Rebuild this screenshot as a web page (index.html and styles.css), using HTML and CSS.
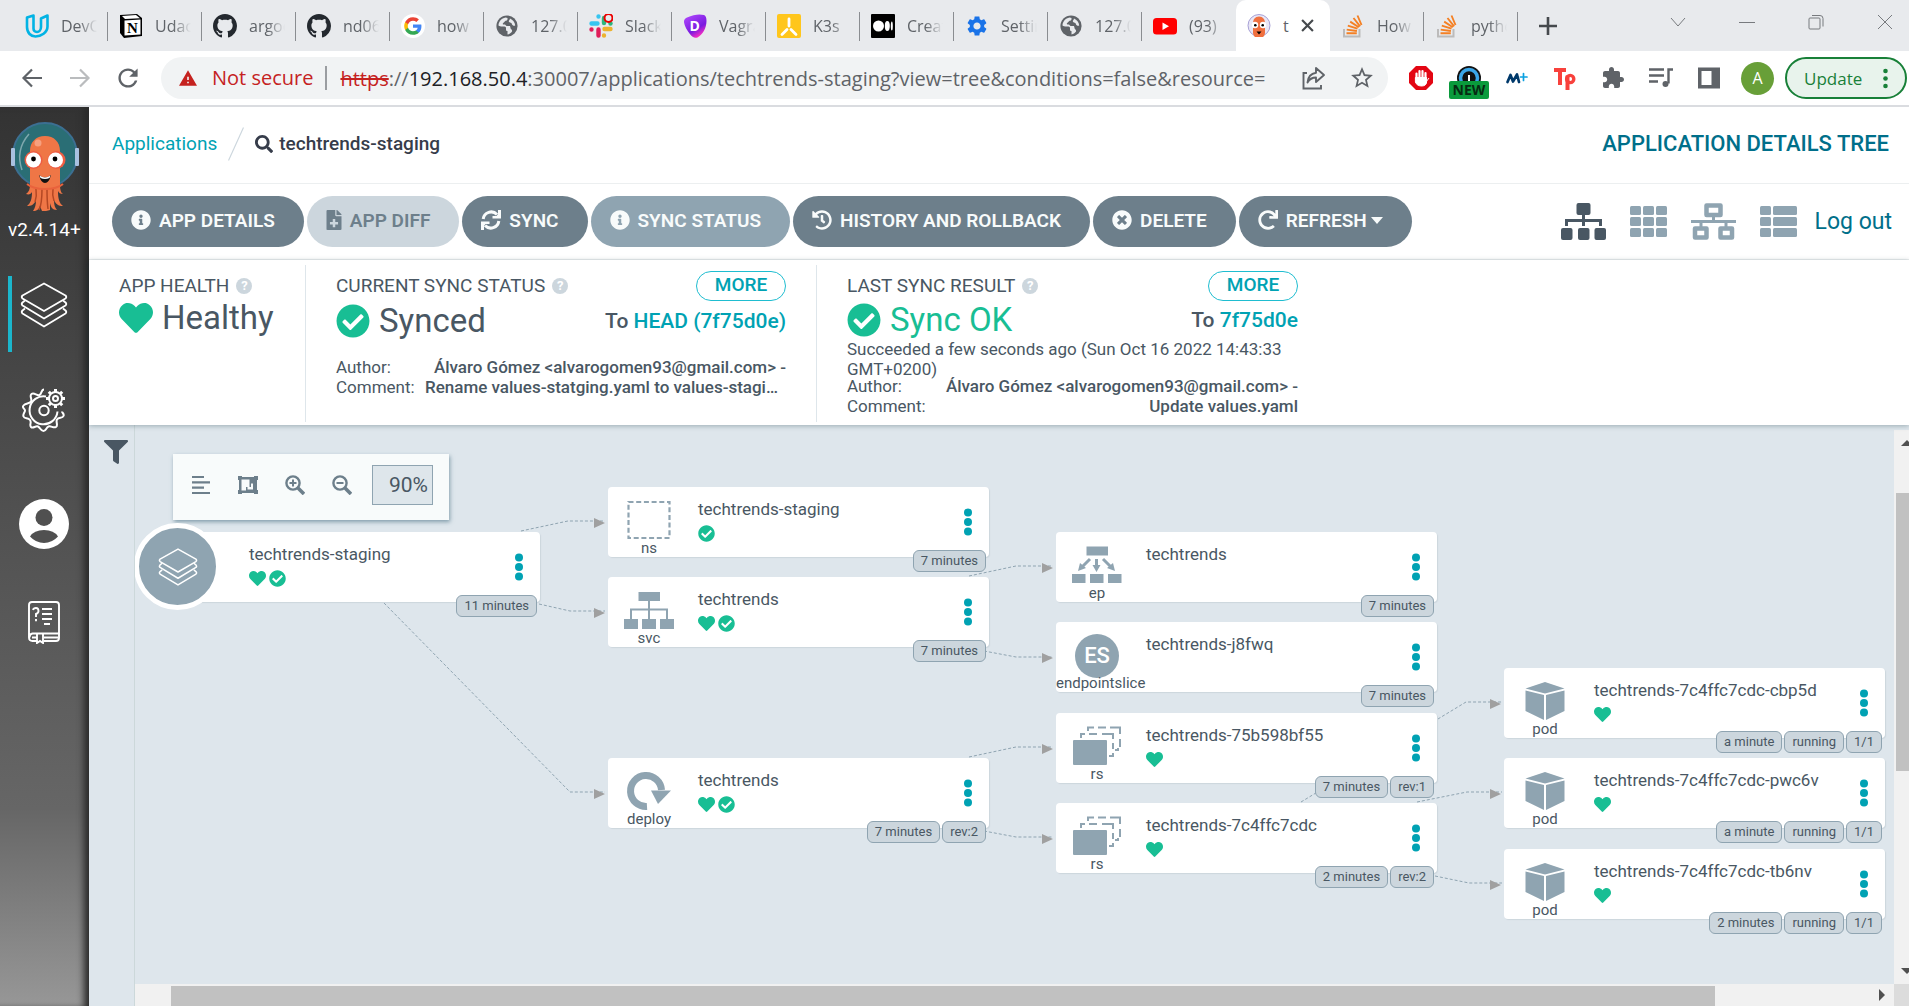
FILE: index.html
```html
<!DOCTYPE html>
<html lang="en">
<head>
<meta charset="utf-8">
<meta name="viewport" content="width=device-width, initial-scale=1">
<title>techtrends-staging - Argo CD</title>
<link rel="stylesheet" href="styles.css">
</head>
<body>
<svg class="sprite" width="0" height="0" aria-hidden="true">
  <symbol id="i-github" viewBox="0 0 16 16"><path d="M8 0C3.58 0 0 3.58 0 8c0 3.54 2.29 6.53 5.47 7.59.4.07.55-.17.55-.38 0-.19-.01-.82-.01-1.49-2.01.37-2.53-.49-2.69-.94-.09-.23-.48-.94-.82-1.13-.28-.15-.68-.52-.01-.53.63-.01 1.08.58 1.23.82.72 1.21 1.87.87 2.33.66.07-.52.28-.87.51-1.07-1.78-.2-3.64-.89-3.64-3.95 0-.87.31-1.59.82-2.15-.08-.2-.36-1.02.08-2.12 0 0 .67-.21 2.2.82.64-.18 1.32-.27 2-.27.68 0 1.36.09 2 .27 1.53-1.04 2.2-.82 2.2-.82.44 1.1.16 1.92.08 2.12.51.56.82 1.27.82 2.15 0 3.07-1.87 3.75-3.65 3.95.29.25.54.73.54 1.48 0 1.07-.01 1.93-.01 2.2 0 .21.15.46.55.38A8.013 8.013 0 0016 8c0-4.42-3.58-8-8-8z" fill="#24292f"/></symbol>
  <symbol id="i-globe" viewBox="0 0 24 24"><circle cx="12" cy="12" r="10.600" fill="#5f6368"/><path d="M10.500 3.500C6.500 4.200 3.600 7.600 3.500 11.500c1 .8 2.200 1 3.500 1h2.500c1 0 1.500.8 1.500 1.700v1.300c0 1 .6 1.500 1.500 1.500v3.500c1.800-.4 3.500-1.500 4.500-3 .3-1-.2-2-1.200-2.500l-.8-3h-3.500l-1.500-1.500H8.500c-.6 0-1-.5-.5-1.200l2.500-2.500c1.200 0 2-.6 2-1.500V4z" fill="#e8eaed"/><path d="M15 4.500c2.800 1.200 5 4 5.200 7-1.400.5-2.800 0-3.200-1.300-.3-1-1-1.500-2-1.700-1.500-.4-1.500-2-.5-2.500z" fill="#e8eaed"/></symbol>
  <symbol id="i-stackoverflow" viewBox="0 0 24 24"><path d="M3 15v7.500h15.500V15" fill="none" stroke="#bcbbbb" stroke-width="2"/><path d="M5.500 19.200h10.300M5.700 15.600l10.200 1.400M6.800 11.600l9.700 3M9.200 7.600l8.600 5.600M12.500 4l6.600 8.300M16.500 1.500l4 9.500" stroke="#f48024" stroke-width="1.900" fill="none"/></symbol>
  <symbol id="i-info" viewBox="0 0 512 512"><path d="M256 8C119.043 8 8 119.083 8 256c0 136.997 111.043 248 248 248s248-111.003 248-248C504 119.083 392.957 8 256 8zm0 110c23.196 0 42 18.804 42 42s-18.804 42-42 42-42-18.804-42-42 18.804-42 42-42zm56 254c0 6.627-5.373 12-12 12h-88c-6.627 0-12-5.373-12-12v-24c0-6.627 5.373-12 12-12h12v-64h-12c-6.627 0-12-5.373-12-12v-24c0-6.627 5.373-12 12-12h64c6.627 0 12 5.373 12 12v100h12c6.627 0 12 5.373 12 12v24z"/></symbol>
  <symbol id="i-check" viewBox="0 0 512 512"><path d="M504 256c0 136.967-111.033 248-248 248S8 392.967 8 256 119.033 8 256 8s248 111.033 248 248zM227.314 387.314l184-184c6.248-6.248 6.248-16.379 0-22.627l-22.627-22.627c-6.248-6.249-16.379-6.249-22.628 0L216 308.118l-70.059-70.059c-6.248-6.248-16.379-6.248-22.628 0l-22.627 22.627c-6.248 6.248-6.248 16.379 0 22.627l104 104c6.249 6.249 16.379 6.249 22.628.001z" fill="#18be94"/></symbol>
  <symbol id="i-heart" viewBox="0 0 512 512"><path d="M462.300 62.600C407.500 15.900 326 24.300 275.700 76.200L256 96.500l-19.700-20.300C186.100 24.300 104.500 15.900 49.700 62.600c-62.800 53.600-66.100 149.800-9.900 207.900l193.500 199.800c12.500 12.900 32.800 12.900 45.300 0l193.500-199.800c56.300-58.100 53-154.300-9.800-207.900z" fill="#18be94"/></symbol>
  <symbol id="i-layers" viewBox="0 0 48 46"><g fill="none" stroke="#fff" stroke-linejoin="round" stroke-width="1.800"><path d="M24 1.500L2.500 13.500q-1.500 1.500 0 3L24 29l21.500-12.500q1.500-1.500 0-3z"/><path d="M5 18.500l-2.500 2q-1.500 1.500 0 3L24 36.500l21.500-13q1.500-1.500 0-3l-2.500-2"/><path d="M5 26.500l-2.500 2q-1.500 1.500 0 3L24 44.500l21.500-13q1.500-1.500 0-3l-2.500-2"/></g></symbol>
  <symbol id="i-kebab" viewBox="0 0 8 28"><circle cx="4" cy="4.500" r="4"/><circle cx="4" cy="14" r="4"/><circle cx="4" cy="23.500" r="4"/></symbol>
  <symbol id="k-rs" viewBox="0 0 50 40"><rect x="1" y="14" width="34" height="25" rx="1"/><path d="M9 12V8h4M17 8h8M30 8h11v5M41 17v6M41 27v3h-4M16 5V1.500h6M26 1.500h8M38 1.500h10V8M48 13v8M43 24h3v-2" fill="none" stroke="#8fa4b1" stroke-width="2"/></symbol>
  <symbol id="k-pod" viewBox="0 0 50 40"><path d="M25 1l19.500 6.500L25 12.500 5.500 7.500zM5.500 9.500L24 14v25L5.500 30zM44.500 9.500L26 14v25l18.500-9z"/></symbol>
</svg>

<header class="browser">
  <div class="tabstrip">
    <div class="tabs" role="tablist">
      <button class="tab" role="tab"><svg class="fav" viewBox="0 0 24 24"><path d="M2 3.500v9.500c0 6 4 9.500 8.500 9.500 5.500 0 12-4 12-10V1.500l-6.500 3v8.500c0 3-2 5-4 5-2.500 0-3.500-1.500-3.500-3.500V1.500z" fill="none" stroke="#02b3e4" stroke-width="2.600" stroke-linejoin="round"/></svg><span>DevOps</span></button>
      <button class="tab" role="tab"><svg class="fav" viewBox="0 0 24 24"><path d="M1 1l17-1 5 4v18L5 24l-4-5z" fill="#000"/><path d="M3 2l14-1 4 3.200L6 5z" fill="#fff"/><path d="M5.500 6.500l16-1v15l-16 1z" fill="#fff"/><text x="8" y="19" font-family="Liberation Serif,serif" font-weight="700" font-size="15">N</text></svg><span>Udacity</span></button>
      <button class="tab" role="tab"><svg class="fav"><use href="#i-github"/></svg><span>argocd</span></button>
      <button class="tab" role="tab"><svg class="fav"><use href="#i-github"/></svg><span>nd064</span></button>
      <button class="tab" role="tab"><svg class="fav" viewBox="-3 -3 30 30"><circle cx="12" cy="12" r="15" fill="#fff"/><path fill="#4285f4" d="M22.560 12.250c0-.78-.07-1.530-.2-2.250H12v4.260h5.920c-.26 1.370-1.040 2.530-2.210 3.310v2.770h3.570c2.080-1.920 3.280-4.740 3.280-8.090z"/><path fill="#34a853" d="M12 23c2.970 0 5.460-.98 7.280-2.660l-3.570-2.770c-.98.66-2.230 1.060-3.710 1.060-2.860 0-5.290-1.930-6.160-4.530H2.180v2.840C3.990 20.530 7.700 23 12 23z"/><path fill="#fbbc05" d="M5.840 14.090c-.22-.66-.35-1.360-.35-2.090s.13-1.430.35-2.090V7.070H2.180C1.430 8.550 1 10.220 1 12s.43 3.450 1.180 4.930l2.850-2.220.81-.62z"/><path fill="#ea4335" d="M12 5.380c1.620 0 3.060.56 4.210 1.640l3.150-3.150C17.450 2.090 14.970 1 12 1 7.700 1 3.990 3.470 2.180 7.070l3.660 2.840c.87-2.600 3.300-4.530 6.160-4.530z"/></svg><span>how t</span></button>
      <button class="tab" role="tab"><svg class="fav"><use href="#i-globe"/></svg><span>127.0.0</span></button>
      <button class="tab" role="tab"><svg class="fav" viewBox="0 0 24 24"><g fill="none" stroke-width="4.400" stroke-linecap="round"><path d="M2.500 9.500h6M9.500 2.500h0" stroke="#36c5f0"/><path d="M15 4v5" stroke="#2eb67d"/><path d="M15.500 15h6M15 21.500h0" stroke="#ecb22e"/><path d="M9.500 15.500v6M2.500 15.500h0" stroke="#e01e5a"/><path d="M21.500 9.500h0" stroke="#2eb67d"/></g><circle cx="19.500" cy="4" r="4" fill="#e8eaed" stroke="#eb0000" stroke-width="2"/></svg><span>Slack</span></button>
      <button class="tab" role="tab"><svg class="fav" viewBox="0 0 24 24"><defs><linearGradient id="vg" x1="0" y1="0" x2=".6" y2="1"><stop offset="0" stop-color="#b44cff"/><stop offset=".7" stop-color="#7a1be0"/><stop offset="1" stop-color="#ff2fc0"/></linearGradient></defs><path d="M4 3.500Q14-1 21 1q2.500 1 2.500 6c0 7-4 14-9 16.500-3 1-5 0-8-4C3 15 1 10 1 7.500 1 5.500 2 4.500 4 3.500z" fill="url(#vg)"/><text x="6.500" y="17" font-family="Open Sans,sans-serif" font-weight="700" font-size="14" fill="#fff">D</text></svg><span>Vagrant</span></button>
      <button class="tab" role="tab"><svg class="fav" viewBox="0 0 24 24"><rect width="24" height="24" rx="2" fill="#ffc61c"/><path d="M12 5v7M10 15.500l-5 5M14 15.500l5 5" stroke="#fff" stroke-width="2.800" stroke-linecap="round"/></svg><span>K3s</span></button>
      <button class="tab" role="tab"><svg class="fav" viewBox="0 0 24 24"><rect width="24" height="24" rx="1"/><g fill="#fff"><ellipse cx="7.500" cy="12" rx="5.500" ry="5.500"/><ellipse cx="16.300" cy="12" rx="2.500" ry="5"/><ellipse cx="20.800" cy="12" rx="1" ry="4.500"/></g></svg><span>Create</span></button>
      <button class="tab" role="tab"><svg class="fav" viewBox="0 0 24 24"><path d="M19.140 12.940c.04-.3.06-.61.06-.94 0-.32-.02-.64-.07-.94l2.030-1.580c.18-.14.23-.41.12-.61l-1.920-3.320c-.12-.22-.37-.29-.59-.22l-2.390.96c-.5-.38-1.030-.7-1.620-.94l-.36-2.540c-.04-.24-.24-.41-.48-.41h-3.840c-.24 0-.43.17-.47.41l-.36 2.540c-.59.24-1.130.57-1.620.94l-2.390-.96c-.22-.08-.47 0-.59.22L2.740 8.870c-.12.21-.08.47.12.61l2.030 1.580c-.05.3-.09.63-.09.94s.02.64.07.94l-2.030 1.580c-.18.14-.23.41-.12.61l1.920 3.320c.12.22.37.29.59.22l2.390-.96c.5.38 1.030.7 1.620.94l.36 2.540c.05.24.24.41.48.41h3.840c.24 0 .44-.17.47-.41l.36-2.540c.59-.24 1.130-.56 1.620-.94l2.390.96c.22.08.47 0 .59-.22l1.920-3.320c.12-.22.07-.47-.12-.61l-2.010-1.580zM12 15.600c-1.980 0-3.600-1.620-3.600-3.600s1.620-3.600 3.600-3.600 3.600 1.620 3.600 3.600-1.620 3.600-3.600 3.600z" fill="#1a73e8"/></svg><span>Settings</span></button>
      <button class="tab" role="tab"><svg class="fav"><use href="#i-globe"/></svg><span>127.0.</span></button>
      <button class="tab" role="tab"><svg class="fav" viewBox="0 0 24 24"><rect y="4" width="24" height="16.500" rx="3.500" fill="#f00"/><path d="M9.500 8.500v7.500l6.500-3.700z" fill="#fff"/></svg><span>(93)</span></button>
      <button class="tab active" role="tab" aria-selected="true"><svg class="fav" viewBox="0 0 24 24"><circle cx="12" cy="11.500" r="11" fill="#e9e7f5" stroke="#a7a0d6" stroke-width="1"/><path d="M12 2.500c4 0 6 3 6 7v9c0 2-1 4-2 4.500H8C7 22.500 6 20.500 6 18.500v-9c0-4 2-7 6-7z" fill="#f0703f"/><circle cx="8" cy="11" r="3.200" fill="#fff"/><circle cx="16" cy="11" r="3.200" fill="#fff"/><circle cx="8.300" cy="11.300" r="1.300"/><circle cx="15.700" cy="11.300" r="1.300"/><path d="M9.500 17.500h5l-2.500 3z"/></svg><span>t</span><svg class="close" viewBox="0 0 12 12"><path d="M1 1l10 10M11 1L1 11" stroke="#45494d" stroke-width="2"/></svg></button>
      <button class="tab" role="tab"><svg class="fav"><use href="#i-stackoverflow"/></svg><span>How to</span></button>
      <button class="tab" role="tab"><svg class="fav"><use href="#i-stackoverflow"/></svg><span>python</span></button>
      <button class="newtab" aria-label="New tab"><svg width="18" height="18" viewBox="0 0 18 18"><path d="M9 0v18M0 9h18" stroke="#45494d" stroke-width="2.600"/></svg></button>
    </div>
    <div class="winctl">
      <button aria-label="Search tabs"><svg viewBox="0 0 16 16"><path d="M1 4l7 8 7-8"/></svg></button>
      <button aria-label="Minimize"><svg viewBox="0 0 16 16"><path d="M0 8.500h16"/></svg></button>
      <button aria-label="Restore"><svg viewBox="0 0 16 16"><rect x="1" y="4" width="11" height="11" rx="1"/><path d="M4 1.500h8q3 0 3 3v8"/></svg></button>
      <button aria-label="Close"><svg viewBox="0 0 16 16"><path d="M1 1l14 14M15 1L1 15"/></svg></button>
    </div>
  </div>
  <div class="navbar">
    <button class="nav" aria-label="Back"><svg viewBox="0 0 24 24"><path d="M22 12H4M12 3.500L3.500 12l8.500 8.500" fill="none" stroke="#5f6368" stroke-width="2.200"/></svg></button>
    <button class="nav" aria-label="Forward"><svg viewBox="0 0 24 24"><path d="M2 12h18M12 3.500l8.500 8.500-8.500 8.500" fill="none" stroke="#babcbe" stroke-width="2.200"/></svg></button>
    <button class="nav" aria-label="Reload"><svg viewBox="2 2 20 20"><path d="M17.650 6.350C16.200 4.900 14.210 4 12 4c-4.420 0-7.990 3.580-7.990 8s3.570 8 7.990 8c3.730 0 6.840-2.550 7.730-6h-2.080c-.82 2.330-3.040 4-5.650 4-3.310 0-6-2.690-6-6s2.690-6 6-6c1.660 0 3.140.69 4.220 1.780L13 11h7V4l-2.350 2.350z" fill="#5f6368"/></svg></button>
    <div class="omnibox">
      <svg class="warn" viewBox="1 2 22 19"><path d="M1 21h22L12 2 1 21zm12-3h-2v-2h2v2zm0-4h-2v-4h2v4z" fill="#c5221f"/></svg>
      <span class="insecure">Not secure</span>
      <div class="url" role="textbox" aria-label="Address" contenteditable="true" spellcheck="false"><s>https</s>://<b>192.168.50.4</b>:30007/applications/techtrends-staging?view=tree&amp;conditions=false&amp;resource=</div>
      <button class="omni" aria-label="Share"><svg viewBox="0 0 24 24" fill="none" stroke="#5f6368" stroke-width="1.900"><path d="M5 7H1.500v15.500H19V19"/><path d="M14 2l8 7-8 7v-4.500c-4 0-6.500 1.500-8.500 5 .5-5.500 3-9 8.500-9.800z" stroke-linejoin="round"/></svg></button>
      <button class="omni" aria-label="Bookmark"><svg viewBox="1 1 22 22"><path d="M22 9.240l-7.190-.62L12 2 9.190 8.630 2 9.240l5.460 4.730L5.820 21 12 17.270 18.180 21l-1.630-7.030L22 9.240zM12 15.400l-3.760 2.270 1-4.280-3.320-2.880 4.380-.38L12 6.100l1.710 4.040 4.380.38-3.320 2.880 1 4.280L12 15.400z" fill="#5f6368"/></svg></button>
    </div>
    <div class="extensions">
      <button aria-label="Ad blocker"><svg viewBox="0 0 24 24"><path d="M7 0h10l7 7v10l-7 7H7l-7-7V7z" fill="#e30613"/><path d="M7.500 13V7.500M10.500 12V5M13.500 12V5M16.500 13V7" stroke="#fff" stroke-width="2.200" stroke-linecap="round"/><path d="M6.400 11.500h11.200V16c0 2.500-2 4-5 4s-5.500-1.500-6.200-4zM17 16l3-4" fill="#fff" stroke="#fff" stroke-width="1"/></svg></button>
      <button class="ext-new" aria-label="Extension"><svg viewBox="0 0 24 24"><circle cx="12" cy="12" r="12" fill="#111"/><circle cx="12" cy="12" r="8.500" fill="none" stroke="#3aa6e8" stroke-width="3.500"/><path d="M11 9h2v6h-2z" fill="#fff"/></svg><span>NEW</span></button>
      <button aria-label="M plus"><svg viewBox="0 0 24 24" fill="none" stroke-linecap="round"><path d="M2.500 16l3-7 2.500 6.500 4-7 2 7.500" stroke="#00396b" stroke-width="2.700" stroke-linejoin="round"/><path d="M18.500 7.500v7M15.500 11h6.500" stroke="#0aa0e0" stroke-width="1.700"/></svg></button>
      <button aria-label="Tp"><svg viewBox="0 0 24 24" fill="none" stroke="#f8413c" stroke-width="4"><path d="M1 4h12M7 4v15"/><path d="M14.500 24V9.500"/><circle cx="17.200" cy="13" r="3.600" stroke-width="3.400"/></svg></button>
      <button aria-label="Extensions"><svg viewBox="0 0 24 24"><path d="M20.500 11H19V7c0-1.100-.9-2-2-2h-4V3.500C13 2.120 11.880 1 10.500 1S8 2.120 8 3.500V5H4c-1.100 0-1.990.9-1.990 2v3.800H3.500c1.490 0 2.700 1.210 2.700 2.700s-1.210 2.700-2.700 2.700H2V20c0 1.100.9 2 2 2h3.800v-1.500c0-1.490 1.210-2.700 2.700-2.700 1.490 0 2.700 1.210 2.700 2.700V22H17c1.100 0 2-.9 2-2v-4h1.500c1.380 0 2.500-1.120 2.500-2.500S21.880 11 20.500 11z" fill="#5f6368"/></svg></button>
      <button aria-label="Media"><svg viewBox="0 0 24 24" fill="none" stroke="#5f6368" stroke-width="2.400"><path d="M0 3.500h15M0 9.500h15M0 15.500h9M24 3.500h-4.500v14"/><circle cx="16.500" cy="18" r="3" fill="#5f6368" stroke="none"/></svg></button>
      <button aria-label="Side panel"><svg viewBox="0 0 24 24"><path d="M1 1.500h22v21H1zM4.500 5v14h10V5z" fill="#5f6368" fill-rule="evenodd"/></svg></button>
      <button class="avatar" aria-label="Profile">A</button>
    </div>
    <button class="update">Update <svg viewBox="0 0 5 21"><circle cx="2.500" cy="3" r="2.300"/><circle cx="2.500" cy="10.500" r="2.300"/><circle cx="2.500" cy="18" r="2.300"/></svg></button>
  </div>
</header>

<div class="app">
  <nav class="sidebar">
    <svg class="logo" viewBox="0 0 68 90"><circle cx="34" cy="33" r="32" fill="#2a6e75" stroke="#3c6f92" stroke-width="2"/><path d="M18 12Q4 28 11 48" fill="none" stroke="#7fa8ae" stroke-width="1.500"/><rect x="0" y="26" width="4" height="18" rx="1" fill="#a9c1e0"/><rect x="64" y="26" width="4" height="18" rx="1" fill="#a9c1e0"/><path d="M34 14c9 0 15 6 15 15v34c0 5 1 8 3 9-3 0-4-1-5-3 0 7 1 12 5 15-5 0-7-2-9-6 0 5 1 8 3 10-5 0-6-3-7-7v7c-2 1-6 1-8 1l-2-5c-1 3-3 5-7 5 2-3 3-6 3-11-2 5-5 6-9 6 4-3 5-8 5-14-1 2-3 3-6 2 3-2 4-5 4-9V29c0-9 6-15 15-15z" fill="#ef7646"/><path d="M28 88q3-6 3-21M37 87q-1-8-1-20M24 80q2-6 1-13M43 79q-2-6-1-12" stroke="#b34724" stroke-width="1.500" fill="none"/><path d="M16 62q6 5 18 5t18-5" stroke="#e9623c" stroke-width="2" fill="none"/><circle cx="27" cy="21" r="3.500" fill="#f7a07e"/><circle cx="22.500" cy="38" r="9" fill="#ee5d43"/><circle cx="45.500" cy="38" r="9" fill="#ee5d43"/><circle cx="22.500" cy="38" r="7.500" fill="#fff"/><circle cx="44.500" cy="38" r="7.500" fill="#fff"/><circle cx="22.500" cy="37" r="2.400"/><circle cx="44" cy="37" r="2.400"/><path d="M28 53q6 5 12 0-2 8-6 8t-6-8z" fill="#111"/><path d="M28.500 53.500q5.500 4 11 0l-1 2.500q-4.500 2-9 0z" fill="#fff"/></svg>
    <div class="version">v2.4.14+</div>
    <a class="side on" href="#" aria-label="Applications"><svg width="48" height="46"><use href="#i-layers"/></svg></a>
    <a class="side" href="#" aria-label="Settings"><svg width="44" height="44" viewBox="0 0 44 44" fill="none" stroke="#fff" stroke-width="2"><path d="M22 1.500c-3 0-2 4.500-4.500 5.500S12 4 9.500 6s1 5-.5 7.500-5.500 1.500-7.500 4 1.500 3 1.500 5-2.500 3.500-1.500 6 4.500 1 6.500 3.500-1 5 1 7 4.500-1.500 7-.5 2.500 4.500 5.500 4.500 2.500-3.500 5-4.500 5 2 7.500.5-.5-5 1-7.500 5.500-1 6.500-3.500-1.500-3-1.500-4.500"/><path d="M24 8.500a14 14 0 1 0 11.500 15"/><circle cx="22" cy="22.500" r="4.700"/><circle cx="33.500" cy="10.500" r="2.500"/><circle cx="33.500" cy="10.500" r="6.500"/><path d="M33.500 1v3M33.500 17v3M24 10.500h3M40 10.500h3M26.800 3.800l2 2M38.200 15.200l2 2M40.200 3.800l-2 2M28.800 15.200l-2 2" stroke-width="3"/></svg></a>
    <a class="side" href="#" aria-label="User info"><svg width="50" height="50" viewBox="0 0 50 50"><circle cx="25" cy="25" r="25" fill="#fff"/><circle cx="25" cy="18.500" r="8.500" fill="#505050"/><path d="M11 37.500Q15 31 25 31t14 6.500Q33 44 25 44t-14-6.500z" fill="#505050"/></svg></a>
    <a class="side" href="#" aria-label="Documentation"><svg width="32" height="43" viewBox="0 0 32 43" fill="none" stroke="#fff" stroke-width="1.900"><path d="M9 40H4.500Q1 40 1 36.500V4q0-3 3-3h24q3 0 3 3v28.500H4.500Q1.500 33 1.500 36.500"/><path d="M4 36.500h4.500M16 36.500h14M16 40h12q3 0 3-3v-5M9 33v9l3-2 3 2v-9"/><path d="M14 8h10M14 13h10M14 18h10M16 23h6"/><path d="M5 9q.5-2 3-2t2.500 3q0 2-2.500 3v3M8 18v2.200"/></svg></a>
  </nav>

  <main class="main">
    <div class="crumbs">
      <a class="crumb" href="#">Applications</a>
      <svg class="slash" viewBox="0 0 16 34"><path d="M.5 33.500L15.500.5" stroke="#ccd6dd" stroke-width="1.200"/></svg>
      <svg class="search" viewBox="0 0 512 512"><path d="M505 442.700L405.300 343c-4.500-4.500-10.600-7-17-7H372c27.600-35.300 44-79.700 44-128C416 93.100 322.900 0 208 0S0 93.100 0 208s93.100 208 208 208c48.300 0 92.700-16.400 128-44v16.300c0 6.400 2.500 12.500 7 17l99.700 99.700c9.400 9.400 24.600 9.400 33.900 0l28.300-28.300c9.400-9.400 9.400-24.600.1-34zM208 336c-70.700 0-128-57.200-128-128 0-70.700 57.200-128 128-128 70.700 0 128 57.200 128 128 0 70.700-57.200 128-128 128z" fill="#363c4a"/></svg>
      <span class="crumb-name">techtrends-staging</span>
      <h1>APPLICATION DETAILS TREE</h1>
    </div>

    <div class="actions">
      <button class="btn"><svg><use href="#i-info"/></svg>APP DETAILS</button>
      <button class="btn disabled"><svg class="doc" viewBox="0 0 384 512"><path fill-rule="evenodd" d="M224 136V0H24C10 0 0 10 0 24v464c0 13 10 24 24 24h336c13 0 24-11 24-24V160H248c-13 0-24-11-24-24zM160 232h64v72h72v64h-72v72h-64v-72H88v-64h72zM377 105L279 7c-5-5-11-7-17-7h-6v128h128v-6c0-6-3-12-7-17z"/></svg>APP DIFF</button>
      <button class="btn"><svg viewBox="0 0 20 20"><path d="M2.200 9A8 8 0 0 1 16 4.500M17.800 11A8 8 0 0 1 4 15.500" fill="none" stroke="#f8fbfb" stroke-width="3"/><path d="M20 0v8.500h-8.500V6h4L17 4V0zM0 20v-8.500h8.500V14h-4L3 16v4z"/></svg>SYNC</button>
      <button class="btn soft"><svg><use href="#i-info"/></svg>SYNC STATUS</button>
      <button class="btn"><svg viewBox="0 0 512 512"><path d="M504 255.531c.253 136.640-111.180 248.372-247.820 248.468-59.015.042-113.223-20.530-155.822-54.911-11.077-8.940-11.905-25.541-1.839-35.607l11.267-11.267c8.609-8.609 22.353-9.551 31.891-1.984C173.062 425.135 212.781 440 256 440c101.705 0 184-82.311 184-184 0-101.705-82.311-184-184-184-48.814 0-93.149 18.969-126.068 49.932l50.754 50.754c10.080 10.080 2.941 27.314-11.313 27.314H24c-8.837 0-16-7.163-16-16V38.627c0-14.254 17.234-21.393 27.314-11.314l49.372 49.372C129.209 34.136 189.552 8 256 8c136.810 0 247.747 110.780 248 247.531zm-180.912 78.784l9.823-12.630c8.138-10.463 6.253-25.542-4.210-33.679L288 256.349V152c0-13.255-10.745-24-24-24h-16c-13.255 0-24 10.745-24 24v135.651l65.409 50.874c10.463 8.137 25.541 6.253 33.679-4.210z"/></svg>HISTORY AND ROLLBACK</button>
      <button class="btn"><svg viewBox="0 0 512 512"><path d="M256 8C119 8 8 119 8 256s111 248 248 248 248-111 248-248S393 8 256 8zm121.600 313.100c4.700 4.700 4.700 12.300 0 17L338 377.600c-4.700 4.700-12.300 4.700-17 0L256 312l-65.100 65.600c-4.700 4.700-12.300 4.700-17 0L134.400 338c-4.700-4.700-4.700-12.300 0-17l65.600-65-65.600-65.100c-4.700-4.700-4.700-12.300 0-17l39.600-39.600c4.700-4.700 12.300-4.700 17 0l65 65.700 65.100-65.600c4.700-4.700 12.300-4.700 17 0l39.600 39.600c4.700 4.700 4.700 12.300 0 17L312 256l65.600 65.100z"/></svg>DELETE</button>
      <button class="btn"><svg viewBox="0 0 512 512"><path d="M500.330 0h-47.410a12 12 0 0 0-12 12.570l4 82.760A247.420 247.420 0 0 0 256 8C119.340 8 7.900 119.530 8 256.190 8.100 393.070 119.100 504 256 504a247.100 247.100 0 0 0 166.180-63.910 12 12 0 0 0 .48-17.430l-34-34a12 12 0 0 0-16.380-.55A176 176 0 1 1 402.100 157.800l-101.530-4.870a12 12 0 0 0-12.570 12v47.410a12 12 0 0 0 12 12h200.330a12 12 0 0 0 12-12V12a12 12 0 0 0-12-12z"/></svg>REFRESH<svg class="caret" viewBox="0 0 12 7"><path d="M0 0h12L6 7z"/></svg></button>
      <div class="views">
        <button aria-label="Tree"><svg width="45" height="38" viewBox="0 0 45 38" fill="#495763"><rect x="15.500" y="0" width="14" height="12" rx="2"/><rect x="0" y="25" width="11.500" height="12" rx="2"/><rect x="17" y="25" width="11.500" height="12" rx="2"/><rect x="33.500" y="25" width="11.500" height="12" rx="2"/><path d="M22.500 11v12M5.500 23v-5.500h34V23" fill="none" stroke="#495763" stroke-width="3"/></svg></button>
        <button aria-label="Pods"><svg width="37" height="32" viewBox="0 0 37 32"><g id="thcol"><rect x="0" y="0" width="11" height="9" rx="1.500"/><rect x="0" y="11" width="11" height="9" rx="1.500"/><rect x="0" y="22" width="11" height="9" rx="1.500"/></g><use href="#thcol" x="13"/><use href="#thcol" x="26"/></svg></button>
        <button aria-label="Network"><svg width="45" height="38" viewBox="0 0 45 38"><path fill="none" stroke="#8fa4b1" stroke-width="4.500" stroke-linejoin="round" d="M15.500 2.500h14v9.500h-14zM4 25.500h11.500v9H4zM29.500 25.500H41v9H29.500z"/><path d="M22.500 14v5M10 19v5M35 19v5M0 18.500h45" stroke="#8fa4b1" stroke-width="3"/></svg></button>
        <button aria-label="List"><svg width="37" height="32" viewBox="0 0 37 32"><use href="#thcol"/><rect x="13" y="0" width="24" height="9" rx="1.500"/><rect x="13" y="11" width="24" height="9" rx="1.500"/><rect x="13" y="22" width="24" height="9" rx="1.500"/></svg></button>
        <a class="logout" href="#">Log out</a>
      </div>
    </div>

    <div class="status">
      <section class="panel health">
        <div class="panel-head">APP HEALTH<span class="help">?</span></div>
        <div class="big"><svg><use href="#i-heart"/></svg>Healthy</div>
      </section>
      <section class="panel">
        <div class="panel-head">CURRENT SYNC STATUS<span class="help">?</span><button class="more">MORE</button></div>
        <div class="big sync"><svg><use href="#i-check"/></svg>Synced<span class="to">To <a href="#">HEAD (7f75d0e)</a></span></div>
        <dl>
          <dt>Author:</dt><dd>Álvaro Gómez &lt;alvarogomen93@gmail.com&gt; -</dd>
          <dt>Comment:</dt><dd class="clip">Rename values-statging.yaml to values-stagi…</dd>
        </dl>
      </section>
      <section class="panel result">
        <div class="panel-head">LAST SYNC RESULT<span class="help">?</span><button class="more">MORE</button></div>
        <div class="big ok"><svg><use href="#i-check"/></svg>Sync OK<span class="to">To <a href="#">7f75d0e</a></span></div>
        <p>Succeeded a few seconds ago (Sun Oct 16 2022 14:43:33 GMT+0200)</p>
        <dl>
          <dt>Author:</dt><dd>Álvaro Gómez &lt;alvarogomen93@gmail.com&gt; -</dd>
          <dt>Comment:</dt><dd>Update values.yaml</dd>
        </dl>
      </section>
    </div>

    <div class="tree">
      <aside class="filter"><button aria-label="Filter"><svg viewBox="0 0 512 512"><path d="M487.976 0H24.028C2.710 0-8.047 25.866 7.058 40.971L192 225.941V432c0 7.831 3.821 15.170 10.237 19.662l80 55.980C298.020 518.690 320 507.493 320 487.980V225.941l184.947-184.970C520.021 25.896 509.338 0 487.976 0z" fill="#495763"/></svg></button></aside>
      <div class="canvas">
        <svg class="edges" width="1759" height="560" fill="none" aria-hidden="true">
          <g stroke="#8fa4b1" stroke-dasharray="3 2">
            <path d="M386 106L433 96h37M404 179l31 7h35M249 178l186 189h35M834 151l47-10h37M849 226l32 6h37M834 332l47-10h37M849 406l32 6h37M1166 377l165-100h36M1282 377l50-10h35M1300 451l34 7h33"/>
          </g>
          <g fill="#a0a0a0">
            <path d="M459 93v10l11-5zM459 183v10l11-5zM459 364v10l11-5zM907 138v10l11-5zM907 228v10l11-5zM907 319v10l11-5zM907 409v10l11-5zM1355 274v10l11-5zM1355 364v10l11-5zM1355 455v10l11-5z"/>
          </g>
        </svg>

        <div class="zoombar">
          <button aria-label="Align"><svg viewBox="0 0 20 20" stroke="#6d7f8b" stroke-width="2.200"><path d="M1 2h12M1 7.300h18M1 12.600h12M1 18h18"/></svg></button>
          <button aria-label="Fit"><svg viewBox="0 0 20 20"><path fill-rule="evenodd" d="M0 1h4v1h12V1h4v4h-1v10h1v4h-4v-1H4v1H0v-4h1V5H0zM3.500 4.500v11h13v-11z"/><path fill-rule="evenodd" d="M11.500 4H17v12H8v-4h3.500zM9.500 12v2.500H15V8.500h-2V12z"/></svg></button>
          <button aria-label="Zoom in"><svg class="lens" viewBox="0 0 20 20"><circle cx="8" cy="8" r="6.600" stroke-width="2.400"/><path d="M13 13l6 6" stroke-width="3.600"/><path d="M8 4.500v7M4.500 8h7" stroke-width="2"/></svg></button>
          <button aria-label="Zoom out"><svg class="lens" viewBox="0 0 20 20"><circle cx="8" cy="8" r="6.600" stroke-width="2.400"/><path d="M13 13l6 6" stroke-width="3.600"/><path d="M4.500 8h7" stroke-width="2"/></svg></button>
          <input type="text" value="90%" aria-label="Zoom level">
        </div>

        <article class="node root">
          <div class="kind"><span class="disc"><svg width="40" height="40"><use href="#i-layers"/></svg></span></div>
          <div class="info"><div class="name">techtrends-staging</div><div class="marks"><svg><use href="#i-heart"/></svg><svg><use href="#i-check"/></svg></div></div>
          <button class="kebab" aria-label="Menu"><svg><use href="#i-kebab"/></svg></button>
          <div class="chips"><span>11 minutes</span></div>
        </article>

        <article class="node ns">
          <div class="kind"><svg viewBox="0 0 50 40"><rect x="4.500" y="2" width="41" height="36" fill="none" stroke="#8fa4b1" stroke-width="2.200" stroke-dasharray="5 2.700"/></svg>ns</div>
          <div class="info"><div class="name">techtrends-staging</div><div class="marks"><svg><use href="#i-check"/></svg></div></div>
          <button class="kebab" aria-label="Menu"><svg><use href="#i-kebab"/></svg></button>
          <div class="chips"><span>7 minutes</span></div>
        </article>
        <article class="node svc">
          <div class="kind"><svg viewBox="0 0 50 40"><path d="M14.500 2h21.500v9H14.500zM0 29h14v10H0zM18 29h14v10H18zM36 29h14v10H36z"/><path d="M25 10v19M7 29v-9.500h36V29" fill="none" stroke="#8fa4b1" stroke-width="2"/></svg>svc</div>
          <div class="info"><div class="name">techtrends</div><div class="marks"><svg><use href="#i-heart"/></svg><svg><use href="#i-check"/></svg></div></div>
          <button class="kebab" aria-label="Menu"><svg><use href="#i-kebab"/></svg></button>
          <div class="chips"><span>7 minutes</span></div>
        </article>
        <article class="node deploy">
          <div class="kind"><svg viewBox="0 0 50 40"><path d="M23 35.500A15.500 15.500 0 1 1 37.500 19" fill="none" stroke="#8fa4b1" stroke-width="7"/><path d="M27 19.500h20L34 33z"/></svg>deploy</div>
          <div class="info"><div class="name">techtrends</div><div class="marks"><svg><use href="#i-heart"/></svg><svg><use href="#i-check"/></svg></div></div>
          <button class="kebab" aria-label="Menu"><svg><use href="#i-kebab"/></svg></button>
          <div class="chips"><span>7 minutes</span><span>rev:2</span></div>
        </article>

        <article class="node ep">
          <div class="kind"><svg viewBox="0 0 50 40"><path d="M14.500 1.500h21.500v9H14.500zM0 29h13.500v9H0zM18 29h13.500v9H18zM36 29h13.500v9H36z"/><path d="M18 14l-8 8M24.500 14v8M31 14l8 8" stroke="#8fa4b1" stroke-width="3"/><path d="M6 26l2-8 6 5zM20.500 20h8l-4 7zM43 26l-2-8-6 5z"/></svg>ep</div>
          <div class="info"><div class="name">techtrends</div></div>
          <button class="kebab" aria-label="Menu"><svg><use href="#i-kebab"/></svg></button>
          <div class="chips"><span>7 minutes</span></div>
        </article>
        <article class="node es">
          <div class="kind"><span class="badge">ES</span>endpointslice</div>
          <div class="info"><div class="name">techtrends-j8fwq</div></div>
          <button class="kebab" aria-label="Menu"><svg><use href="#i-kebab"/></svg></button>
          <div class="chips"><span>7 minutes</span></div>
        </article>
        <article class="node rs1">
          <div class="kind"><svg><use href="#k-rs"/></svg>rs</div>
          <div class="info"><div class="name">techtrends-75b598bf55</div><div class="marks"><svg><use href="#i-heart"/></svg></div></div>
          <button class="kebab" aria-label="Menu"><svg><use href="#i-kebab"/></svg></button>
          <div class="chips"><span>7 minutes</span><span>rev:1</span></div>
        </article>
        <article class="node rs2">
          <div class="kind"><svg><use href="#k-rs"/></svg>rs</div>
          <div class="info"><div class="name">techtrends-7c4ffc7cdc</div><div class="marks"><svg><use href="#i-heart"/></svg></div></div>
          <button class="kebab" aria-label="Menu"><svg><use href="#i-kebab"/></svg></button>
          <div class="chips"><span>2 minutes</span><span>rev:2</span></div>
        </article>

        <article class="node pod1">
          <div class="kind"><svg><use href="#k-pod"/></svg>pod</div>
          <div class="info"><div class="name">techtrends-7c4ffc7cdc-cbp5d</div><div class="marks"><svg><use href="#i-heart"/></svg></div></div>
          <button class="kebab" aria-label="Menu"><svg><use href="#i-kebab"/></svg></button>
          <div class="chips"><span>a minute</span><span>running</span><span>1/1</span></div>
        </article>
        <article class="node pod2">
          <div class="kind"><svg><use href="#k-pod"/></svg>pod</div>
          <div class="info"><div class="name">techtrends-7c4ffc7cdc-pwc6v</div><div class="marks"><svg><use href="#i-heart"/></svg></div></div>
          <button class="kebab" aria-label="Menu"><svg><use href="#i-kebab"/></svg></button>
          <div class="chips"><span>a minute</span><span>running</span><span>1/1</span></div>
        </article>
        <article class="node pod3">
          <div class="kind"><svg><use href="#k-pod"/></svg>pod</div>
          <div class="info"><div class="name">techtrends-7c4ffc7cdc-tb6nv</div><div class="marks"><svg><use href="#i-heart"/></svg></div></div>
          <button class="kebab" aria-label="Menu"><svg><use href="#i-kebab"/></svg></button>
          <div class="chips"><span>2 minutes</span><span>running</span><span>1/1</span></div>
        </article>
      </div>
      <div class="vbar"><svg viewBox="0 0 8 6"><path d="M0 6l6-6 6 6z"/></svg><i></i><svg viewBox="0 0 8 6"><path d="M0 0l6 6 6-6z"/></svg></div>
      <div class="hbar"><i></i><svg viewBox="0 0 6 12"><path d="M0 0l6 6-6 6z"/></svg></div>
      <div class="corner"></div>
    </div>
  </main>
</div>
</body>
</html>
```
FILE: styles.css
```css
* { box-sizing: border-box; }

body {
  margin: 0;
  min-height: 100vh;
  display: flex;
  flex-direction: column;
  overflow: hidden;
  font-family: Roboto, "Liberation Sans", sans-serif;
  color: #495763;
  background: #fff;
}

button {
  margin: 0;
  padding: 0;
  border: 0;
  background: none;
  font: inherit;
  color: inherit;
  cursor: pointer;
}
a { text-decoration: none; color: #00a2b3; }
svg { display: block; flex: none; }
.sprite { position: absolute; }

/* Browser chrome */
.browser {
  font-family: "Open Sans", "Noto Sans", sans-serif;
  border-bottom: 2px solid #dadce0;
}
.tabstrip {
  display: flex;
  justify-content: space-between;
  min-height: 51px;
  background: #e8eaed;
}
.tabs { display: flex; padding-left: 14px; }
.tab {
  position: relative;
  display: flex;
  align-items: center;
  width: 94px;
  padding-left: 11px;
  gap: 12px;
  font-size: 16px;
  color: #5f6368;
}
.tab:not(:has(+ .active)):not(.active)::after {
  content: "";
  position: absolute;
  right: 0;
  top: 12px;
  width: 1px;
  height: 29px;
  background: #8a8d91;
}
.tab span {
  width: 36px;
  overflow: hidden;
  white-space: nowrap;
  text-align: left;
  -webkit-mask-image: linear-gradient(90deg, #000 50%, transparent);
  mask-image: linear-gradient(90deg, #000 50%, transparent);
}
.fav { width: 24px; height: 24px; }
.tab.active { background: #fff; border-radius: 10px 10px 0 0; }
.tab.active span { width: 6px; -webkit-mask-image: none; mask-image: none; }
.close { width: 13px; height: 13px; }
.newtab { display: flex; align-items: center; padding: 0 21px; }
.winctl {
  display: flex;
  gap: 53px;
  padding: 14px 16px 0 0;
  align-items: flex-start;
}
.winctl svg { width: 16px; height: 16px; fill: none; stroke: #777a7e; stroke-width: 1; }

.navbar {
  display: flex;
  align-items: center;
  min-height: 54px;
  padding: 0 2px 0 20px;
  background: #fff;
}
.nav { width: 24px; margin-right: 24px; }
.nav svg { width: 24px; height: 24px; }
.nav + .omnibox { margin-left: -3px; }
.omnibox {
  flex: 1;
  display: flex;
  align-items: center;
  height: 42px;
  min-width: 0;
  padding: 0 14px 0 18px;
  border-radius: 21px;
  background: #f1f3f4;
  font-size: 20px;
  color: #5f6368;
}
.warn { width: 18px; height: 16px; }
.insecure {
  margin-left: 15px;
  padding-right: 12px;
  line-height: 24px;
  border-right: 2px solid #9a9da1;
  color: #c5221f;
  white-space: nowrap;
}
.url {
  flex: 1;
  min-width: 0;
  margin-left: 13px;
  overflow: hidden;
  white-space: nowrap;
  outline: 0;
}
.url s { color: #c5221f; }
.url b { font-weight: 400; color: #202124; }
.omni { margin-left: 24px; }
.omni svg { width: 24px; height: 24px; }
.extensions {
  display: flex;
  align-items: center;
  gap: 24px;
  margin: 0 11px 0 21px;
}
.extensions svg { width: 24px; height: 24px; }
.ext-new { position: relative; }
.ext-new span {
  position: absolute;
  left: -8px;
  top: 15px;
  width: 40px;
  border-radius: 2px;
  background: #0a9a3c;
  color: #062b12;
  font-size: 14px;
  font-weight: 700;
  line-height: 18px;
}
.avatar {
  width: 33px;
  height: 33px;
  margin-left: -4px;
  border-radius: 50%;
  background: #689f38;
  color: #fff;
  font-size: 16px;
}
.update {
  display: flex;
  align-items: center;
  justify-content: space-between;
  width: 122px;
  height: 42px;
  padding: 0 17px 0 17px;
  border: 2px solid #188038;
  border-radius: 21px;
  background: #e8f3ec;
  color: #188038;
  font-size: 17px;
}
.update svg { width: 5px; height: 21px; fill: #188038; }

/* App shell */
.app { flex: 1; display: flex; min-height: 0; }
.sidebar {
  display: flex;
  flex-direction: column;
  align-items: center;
  width: 89px;
  padding-top: 15px;
  background: linear-gradient(#333 0, #666 78%, #979797 100%);
  box-shadow: inset -8px 0 7px -3px #2a2a2a;
}
.logo { width: 68px; height: 90px; }
.version {
  align-self: flex-start;
  width: 73px;
  margin: 5px 0 34px 8px;
  overflow: hidden;
  white-space: nowrap;
  font-size: 19px;
  line-height: 25px;
  color: #fff;
}
.side {
  display: flex;
  align-items: center;
  justify-content: center;
  align-self: stretch;
  min-height: 76px;
  margin: 0 1px 30px 0;
}
.side.on {
  margin: 0 1px 16px 8px;
  padding: 0 12px 18px 0;
  border-left: 4px solid #1bb6cc;
}
.side:nth-of-type(2) { margin-bottom: 42px; padding-top: 8px; }
.side:nth-of-type(3) { margin-bottom: 22px; }

.main {
  flex: 1;
  min-width: 0;
  display: flex;
  flex-direction: column;
}
.crumbs {
  display: flex;
  align-items: center;
  min-height: 77px;
  padding: 0 20px 3px 23px;
  border-bottom: 1px solid #eceff0;
  font-size: 19px;
}
.slash { width: 16px; height: 34px; margin: 0 11px; }
.search { width: 18px; height: 18px; }
.crumb-name { margin-left: 6px; font-weight: 500; color: #363c4a; }
h1 {
  margin: 0 0 0 auto;
  font-size: 22px;
  font-weight: 500;
  color: #006f8a;
}
.actions {
  display: flex;
  align-items: center;
  gap: 3px;
  min-height: 76px;
  padding: 0 17px 0 23px;
  border-bottom: 1px solid #eceff0;
}
.btn {
  display: flex;
  align-items: center;
  gap: 8px;
  height: 51px;
  padding: 0 29px 3px 19px;
  border-radius: 26px;
  background: #6d7f8b;
  color: #f8fbfb;
  fill: #f8fbfb;
  font-size: 19px;
  font-weight: 600;
  white-space: nowrap;
}
.btn svg { width: 20px; height: 20px; }
.btn .doc { width: 16px; height: 20px; }
.btn .caret { width: 12px; height: 7px; margin-left: -4px; }
.btn.disabled { background: #ccd6dd; color: #6d7f8b; fill: #6d7f8b; }
.btn.soft { background: #8fa4b1; }
.views {
  display: flex;
  align-items: center;
  gap: 24px;
  margin-left: auto;
  fill: #8fa4b1;
}
.views .logout { margin-left: -6px; font-size: 23px; color: #006f8a; }

.status {
  position: relative;
  z-index: 1;
  display: flex;
  min-height: 165px;
  padding: 5px 0 3px;
  box-shadow: 0 1px 5px rgba(0, 40, 50, .3);
}
.panel { width: 511px; padding: 6px 30px 0 30px; border-right: 1px solid #dee6eb; }
.panel.health { width: 217px; padding-right: 0; }
.panel.result { border: 0; }
.panel-head { display: flex; align-items: center; min-height: 30px; font-size: 19px; line-height: 28px; }
.help {
  width: 16px;
  height: 16px;
  margin-left: 7px;
  border-radius: 50%;
  background: #ccd6dd;
  color: #fff;
  font-size: 13px;
  font-weight: 700;
  line-height: 16px;
  text-align: center;
}
.more {
  width: 90px;
  height: 30px;
  margin-left: auto;
  padding-bottom: 2px;
  border: 1px solid #1fbdd0;
  border-radius: 15px;
  font-weight: 500;
  line-height: 24px;
  color: #00a2b3;
}
.big { display: flex; align-items: center; gap: 9px; font-size: 33px; line-height: 32px; }
.big svg { width: 34px; height: 34px; }
.to { margin-left: auto; font-size: 21px; font-weight: 500; }
.sync { padding-top: 3px; }
.ok { padding-top: 2px; color: #18be94; }
.ok .to { color: #495763; }
dl {
  display: grid;
  grid-template-columns: auto 1fr;
  margin: 19px 0 0;
  font-size: 17px;
  line-height: 20px;
}
dd { margin: 0; text-align: right; font-weight: 500; white-space: nowrap; }
dd.clip { padding-right: 8px; }
.result p { margin: 2px 0 0; font-size: 17px; line-height: 20px; }
.result dl { margin-top: -3px; }

/* Resource tree */
.tree {
  flex: 1;
  display: grid;
  grid-template-columns: 46px 1fr 15px;
  grid-template-rows: 1fr 22px;
  min-height: 581px;
  background: #dee6ec;
}
.filter {
  grid-row: 1 / 3;
  padding: 15px 0 0 15px;
  border-right: 1px solid #ccd8da;
}
.filter svg { width: 24px; height: 24px; }
.canvas { position: relative; overflow: hidden; }
.edges { position: absolute; left: 0; top: 0; }

.zoombar {
  position: absolute;
  left: 38px;
  top: 29px;
  display: flex;
  align-items: center;
  gap: 27px;
  height: 66px;
  padding: 0 16px 4px 18px;
  background: #f8fbfb;
  box-shadow: 1px 2px 4px rgba(70, 110, 130, .6);
}
.zoombar svg { width: 20px; height: 20px; fill: #6d7f8b; }
.zoombar .lens { fill: none; stroke: #6d7f8b; }
.zoombar input {
  width: 61px;
  height: 40px;
  margin-left: -7px;
  padding: 0 4px 0 0;
  border: 1px solid #8fa4b1;
  border-radius: 0;
  background: #dee6eb;
  color: #495763;
  font: 21px Roboto, sans-serif;
  text-align: right;
}

.node {
  position: absolute;
  display: flex;
  width: 381px;
  height: 70px;
  border-radius: 4px;
  background: #fff;
  box-shadow: 1px 1px 1px #ccd6dd;
}
.root { left: 24px; top: 107px; }
.ns { left: 473px; top: 62px; }
.svc { left: 473px; top: 152px; }
.deploy { left: 473px; top: 333px; }
.ep { left: 921px; top: 107px; }
.es { left: 921px; top: 197px; }
.rs1 { left: 921px; top: 288px; }
.rs2 { left: 921px; top: 378px; }
.pod1 { left: 1369px; top: 243px; }
.pod2 { left: 1369px; top: 333px; }
.pod3 { left: 1369px; top: 424px; }

.kind {
  display: flex;
  flex-direction: column;
  align-items: safe center;
  width: 82px;
  padding-top: 13px;
  font-size: 15px;
  line-height: 17px;
  fill: #8fa4b1;
}
.kind > svg { width: 50px; height: 40px; }
.badge {
  width: 44px;
  height: 44px;
  margin: -1px 0 -3px;
  border-radius: 50%;
  background: #8fa4b1;
  color: #fff;
  font-size: 22px;
  font-weight: 500;
  line-height: 44px;
  text-align: center;
}
.disc {
  position: absolute;
  left: -25px;
  top: -9px;
  display: flex;
  align-items: center;
  justify-content: center;
  width: 87px;
  height: 87px;
  border: 5px solid #fff;
  border-radius: 50%;
  background: #8fa4b1;
}
.info { flex: 1; padding: 11px 0 0 8px; }
.name { font-size: 17px; line-height: 22px; white-space: nowrap; }
.marks { display: flex; gap: 3px; margin-top: 5px; }
.marks svg { width: 17px; height: 17px; }
.kebab { width: 8px; margin-right: 17px; }
.kebab svg { width: 8px; height: 28px; fill: #00a2b3; }
.chips {
  position: absolute;
  right: 3px;
  top: 63px;
  display: flex;
  gap: 2px;
}
.chips span {
  padding: 0 7px;
  border: 1px solid #8fa4b1;
  border-radius: 6px;
  background: #ccd6dd;
  font-size: 13px;
  line-height: 20px;
  white-space: nowrap;
}

/* Scroll bars */
.vbar {
  display: flex;
  flex-direction: column;
  margin-top: 5px;
  padding: 10px 0;
  background: #f1f1f1;
}
.vbar svg { width: 8px; height: 6px; margin-left: auto; fill: #505050; }
.vbar i { flex: 0 1 52%; margin: 47px 0 auto 2px; background: #c1c1c1; }
.hbar { display: flex; align-items: center; background: #f1f1f1; }
.hbar i { flex: 1; align-self: stretch; margin: 2px 164px 0 36px; background: #c1c1c1; }
.hbar svg { width: 6px; height: 12px; margin-right: 9px; fill: #505050; }
.corner { background: #dcdcdc; }
```
